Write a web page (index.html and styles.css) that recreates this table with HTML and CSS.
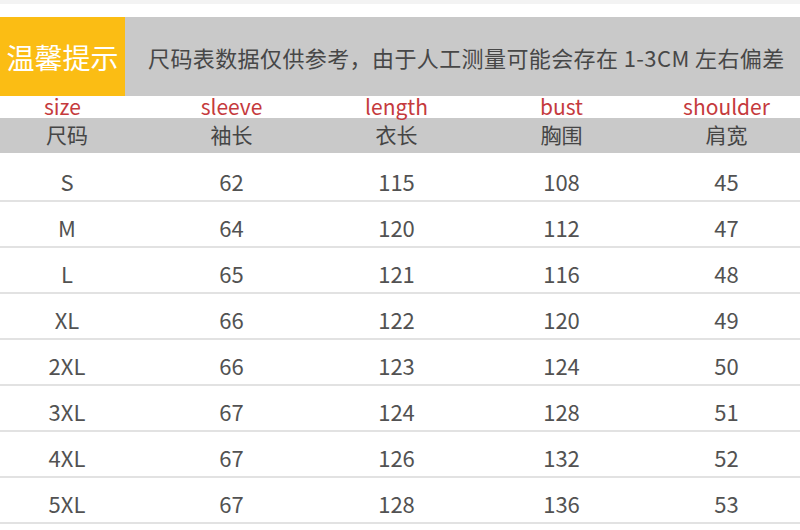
FILE: index.html
```html
<!DOCTYPE html>
<html lang="zh">
<head>
<meta charset="utf-8">
<link rel="stylesheet" href="styles.css">
</head>
<body>
<div class="page">
  <div class="topline"></div>
  <div class="banner">
    <div class="tip">温馨提示</div>
    <div class="notice">尺码表数据仅供参考，由于人工测量可能会存在 1-3CM 左右偏差</div>
  </div>
  <div class="grid en">
    <div class="c first en-first">size</div><div class="c">sleeve</div><div class="c">length</div><div class="c">bust</div><div class="c">shoulder</div>
  </div>
  <div class="grid head">
    <div class="c first">尺码</div><div class="c">袖长</div><div class="c">衣长</div><div class="c">胸围</div><div class="c">肩宽</div>
  </div>
  <div class="rows">
    <div class="grid row"><div class="c first">S</div><div class="c">62</div><div class="c">115</div><div class="c">108</div><div class="c">45</div></div>
    <div class="grid row"><div class="c first">M</div><div class="c">64</div><div class="c">120</div><div class="c">112</div><div class="c">47</div></div>
    <div class="grid row"><div class="c first">L</div><div class="c">65</div><div class="c">121</div><div class="c">116</div><div class="c">48</div></div>
    <div class="grid row"><div class="c first">XL</div><div class="c">66</div><div class="c">122</div><div class="c">120</div><div class="c">49</div></div>
    <div class="grid row"><div class="c first">2XL</div><div class="c">66</div><div class="c">123</div><div class="c">124</div><div class="c">50</div></div>
    <div class="grid row"><div class="c first">3XL</div><div class="c">67</div><div class="c">124</div><div class="c">128</div><div class="c">51</div></div>
    <div class="grid row"><div class="c first">4XL</div><div class="c">67</div><div class="c">126</div><div class="c">132</div><div class="c">52</div></div>
    <div class="grid row"><div class="c first">5XL</div><div class="c">67</div><div class="c">128</div><div class="c">136</div><div class="c">53</div></div>
  </div>
</div>
</body>
</html>
```
FILE: styles.css
```css
* { box-sizing: border-box; }
html, body { margin: 0; padding: 0; background: #fff; }
body {
  width: 800px;
  height: 530px;
  overflow: hidden;
  font-family: "Noto Sans CJK SC", "Noto Sans", sans-serif;
  color: #4a4a4a;
}
.topline { height: 4px; background: #f3f3f3; margin-bottom: 13px; }
.banner {
  display: flex;
  height: 79px;
  background: #c9c9c9;
}
.tip {
  width: 125px;
  background: #fbbd14;
  color: #fff;
  font-size: 28px;
  display: flex;
  align-items: center;
  justify-content: center;
}
.notice {
  flex: 1;
  display: flex;
  align-items: center;
  padding-left: 23px;
  font-size: 22px;
  letter-spacing: 0.4px;
  color: #474747;
  white-space: nowrap;
}
.grid {
  display: grid;
  grid-template-columns: 149px repeat(4, 165px);
}
.c { text-align: center; white-space: nowrap; }
.first { padding-right: 15px; }
.en {
  height: 22px;
  line-height: 20px;
  font-size: 21px;
  color: #c53a3d;
}
.en .en-first { padding-right: 24px; }
.head {
  height: 35px;
  background: #c9c9c9;
  font-size: 21px;
  line-height: 33px;
  color: #454545;
}
.rows { padding-top: 3px; }
.row {
  height: 46px;
  border-bottom: 2px solid #e2e2e2;
  font-size: 22px;
  line-height: 50px;
  color: #525252;
}
```
